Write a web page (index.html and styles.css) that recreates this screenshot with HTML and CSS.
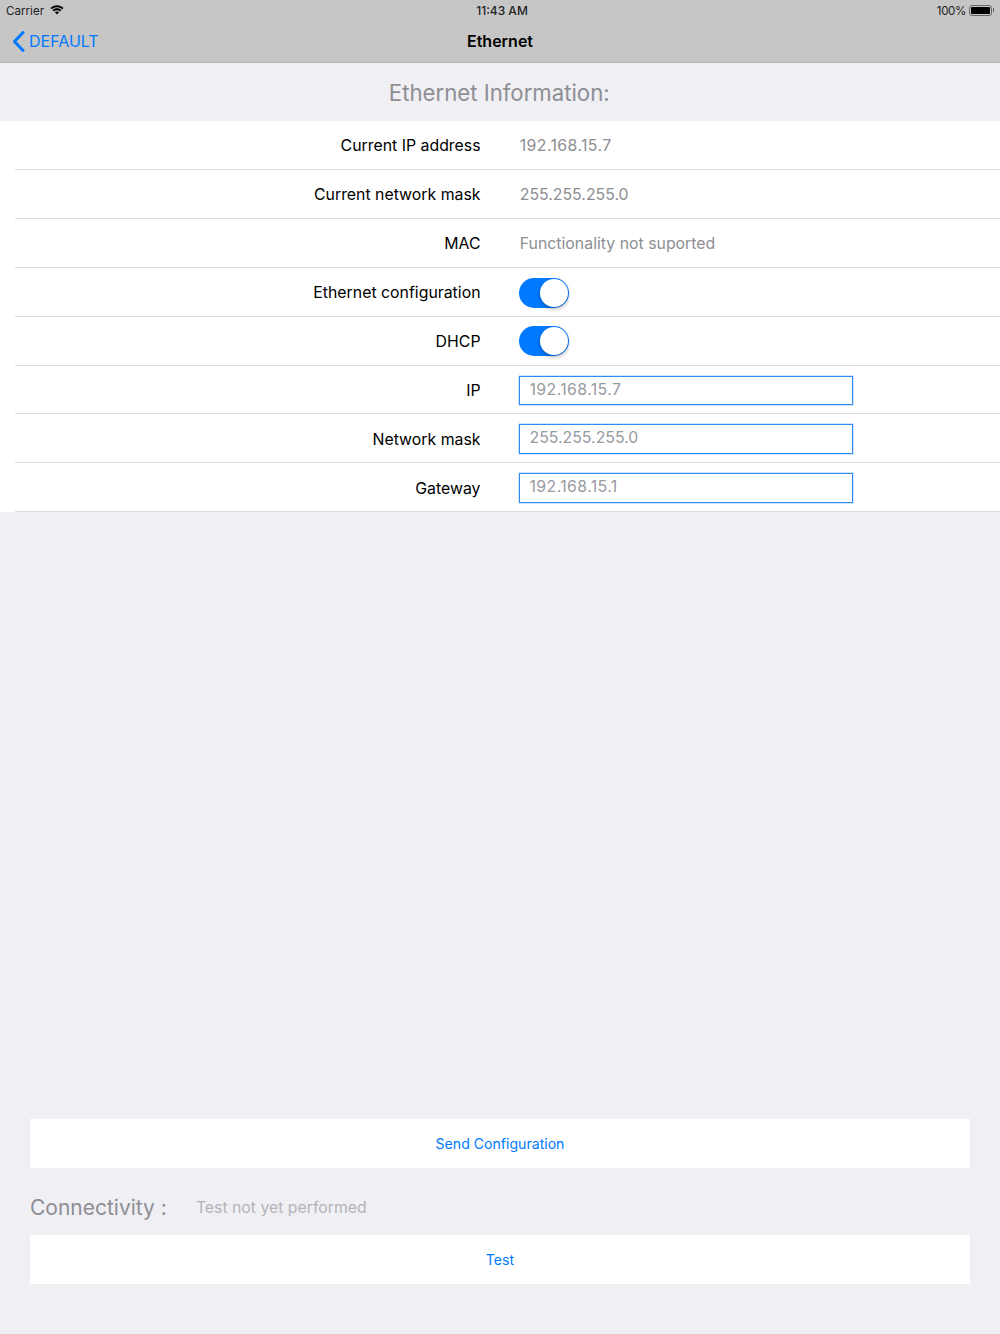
FILE: index.html
```html
<!DOCTYPE html>
<html>
<head>
  <meta charset="UTF-8">
  <title>Ethernet</title>
  <link rel="stylesheet" href="styles.css">
</head>
<body>
  <div class="page">
    <header class="top">
      <div class="status">
        <div class="status-left">
          <span class="status-text">Carrier</span>
          <svg class="wifi" width="14" height="10" viewBox="0 0 15 10"><path d="M7.500 2.100c2.200 0 4.100.8 5.600 2.200l1.400-1.500C12.600 1 10.200 0 7.500 0S2.400 1 .5 2.800l1.400 1.500c1.500-1.400 3.400-2.200 5.600-2.200z"/><path d="M7.500 5.300c1.300 0 2.400.5 3.300 1.300l1.400-1.500C11 3.900 9.300 3.200 7.500 3.200S4 3.900 2.800 5.100l1.400 1.500c.9-.8 2-1.300 3.300-1.300z"/><path d="M7.500 6.500c-.9 0-1.700.3-2.300.9l2.300 2.500 2.300-2.500c-.6-.6-1.400-.9-2.300-.9z"/></svg>
        </div>
        <div class="status-time">11:43 AM</div>
        <div class="status-right">
          <span class="status-text percent">100%</span>
          <div class="battery"><div class="battery-fill"></div></div>
          <div class="battery-tip"></div>
        </div>
      </div>
      <nav class="nav">
        <a class="back">
          <svg width="13" height="21" viewBox="0 0 13 21"><path d="M11 1.500 2.500 10.500 11 19.500" fill="none" stroke="#007aff" stroke-width="3" stroke-linecap="round" stroke-linejoin="round"/></svg>
          <span>DEFAULT</span>
        </a>
        <div class="nav-title">Ethernet</div>
      </nav>
    </header>

    <h1 class="section-title">Ethernet Information:</h1>

    <div class="table">
      <div class="row"><div class="label">Current IP address</div><div class="value plain ip">192.168.15.7</div></div>
      <div class="row"><div class="label">Current network mask</div><div class="value plain">255.255.255.0</div></div>
      <div class="row"><div class="label">MAC</div><div class="value plain">Functionality not suported</div></div>
      <div class="row"><div class="label">Ethernet configuration</div><div class="value"><div class="switch"><div class="knob"></div></div></div></div>
      <div class="row"><div class="label">DHCP</div><div class="value"><div class="switch"><div class="knob"></div></div></div></div>
      <div class="row"><div class="label">IP</div><div class="value"><div class="input ip">192.168.15.7</div></div></div>
      <div class="row"><div class="label">Network mask</div><div class="value"><div class="input">255.255.255.0</div></div></div>
      <div class="row"><div class="label">Gateway</div><div class="value"><div class="input ip">192.168.15.1</div></div></div>
    </div>

    <div class="bottom">
      <div class="button">Send Configuration</div>
      <div class="connectivity">
        <span class="conn-title">Connectivity :</span>
        <span class="conn-state">Test not yet performed</span>
      </div>
      <div class="button">Test</div>
    </div>
  </div>
</body>
</html>
```

FILE: styles.css
```css
html, body {margin: 0; height: 100%;}
body {background: #efeff4; font-family: Inter, "Liberation Sans", sans-serif; color: #000;}

.page {height: 1334px; display: flex; flex-direction: column; overflow: hidden;}

.top {height: 62px; background: #c6c6c6; border-bottom: 1px solid #b4b4b4;}
.status {height: 20px; display: grid; grid-template-columns: 1fr auto 1fr; align-items: center; padding: 0 6px; font-size: 11.600px; color: #222;}
.status-left {display: flex; align-items: center; gap: 6px;}
.status-text {padding-top: 1px;}
.percent {letter-spacing: -0.4px;}
.wifi {fill: #000;}
.status-time {font-size: 12px; font-weight: 500; padding-left: 4px;}
.status-right {display: flex; align-items: center; justify-content: flex-end; gap: 3px;}
.battery {width: 23px; height: 11px; border: 1px solid #666; border-radius: 3px; padding: 1px; box-sizing: border-box;}
.battery-fill {height: 100%; background: #000; border-radius: 1px;}
.battery-tip {width: 1px; height: 4px; background: #666; margin-left: -2px;}

.nav {height: 42px; display: grid; grid-template-columns: 1fr auto 1fr; align-items: center;}
.back {display: flex; align-items: center; gap: 4px; padding-left: 12px; color: #007aff; font-size: 16px;}
.nav-title {font-size: 16px; font-weight: 600;}

.section-title {margin: 0; height: 58.200px; padding-right: 1.500px; line-height: 59px; text-align: center; font-size: 22.200px; font-weight: 400; color: #8e8e93;}

.table {background: #fff;}
.row {height: 48.875px; box-sizing: border-box; margin-left: 15px; padding-top: 1.500px; border-bottom: 1px solid #dcdcdf; display: grid; grid-template-columns: 465.500px 1fr; align-items: center; column-gap: 38.500px; font-size: 15.850px;}
.label {text-align: right;}
.value {color: #8e8e93; display: flex; align-items: center;}
.plain {padding-left: 0.750px;}
/* Inter's 1 is narrower than the original */
.ip {letter-spacing: 0.400px;}

.switch {width: 50px; height: 30px; background: #007aff; border-radius: 15px; display: flex; justify-content: flex-end; align-items: center; padding-right: 1px; box-sizing: border-box;}
.knob {width: 28px; height: 28px; background: #fff; border-radius: 50%; box-shadow: 0 2px 4px rgba(0,0,0,0.3);}

.input {width: 334px; height: 29.500px; box-sizing: border-box; border: 1px solid #2f8cf5; box-shadow: 0 0 0 0.5px rgba(47,140,245,0.45); padding-left: 9.500px; line-height: 25.500px; color: #9a9a9f;}

.bottom {margin-top: auto; padding: 0 30px 50px; display: flex; flex-direction: column;}
.button {height: 49px; background: #fff; display: flex; align-items: center; justify-content: center; font-size: 14.100px; color: #007aff;}
.connectivity {height: 67px; box-sizing: border-box; padding-top: 12px; display: flex; align-items: center; gap: 29px;}
.conn-title {font-size: 21px; color: #8e8e93;}
.conn-state {font-size: 15.800px; color: #b4b4b8;}
```
